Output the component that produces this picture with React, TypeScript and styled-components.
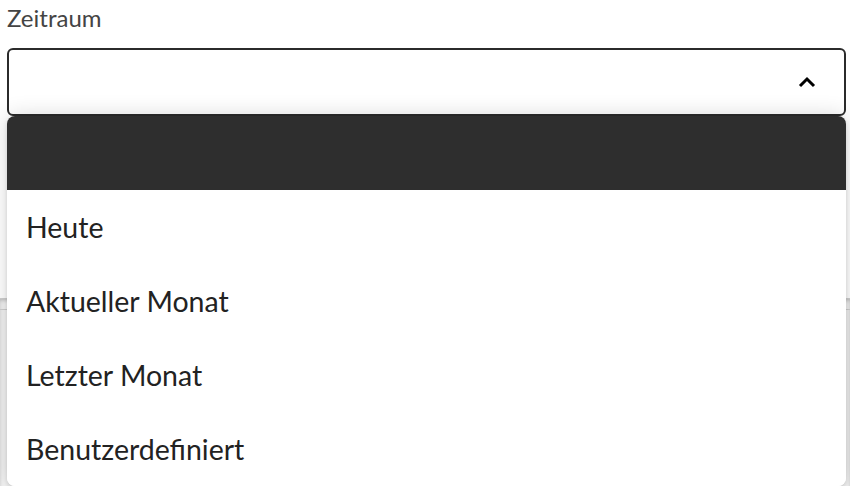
import styled, { createGlobalStyle } from "styled-components";

const GlobalStyle = createGlobalStyle`
  body {
    margin: 0;
    background: #ffffff;
    font-family: Lato, "Open Sans", sans-serif;
  }
`;

const Page = styled.div`
  width: 850px;
  height: 486px;
  overflow: hidden;
  position: relative;
  padding: 4px 4px 0 7px;
  box-sizing: border-box;
`;

const Label = styled.div`
  font-size: 24px;
  color: #444444;
  line-height: 28px;
  margin-bottom: 16px;
`;

const Field = styled.div`
  position: relative;
`;

const SelectBox = styled.div`
  height: 68px;
  box-sizing: border-box;
  border: 2px solid #2b2b2b;
  border-radius: 6px;
  display: flex;
  align-items: center;
  justify-content: flex-end;
  padding-right: 28px;
  background: #ffffff;
`;

const Behind = styled.div`
  margin-top: 182px;
  margin-left: -7px;
  margin-right: -4px;
  height: 200px;
  background: #f4f4f4;
  box-shadow: inset 0 3px 4px -1px rgba(0, 0, 0, 0.25);
`;

const BehindRow = styled.div<{ $top: number }>`
  height: 1px;
  background: #cfcfcf;
  margin-top: ${(p) => p.$top}px;
`;

const Menu = styled.ul`
  position: absolute;
  top: 68px;
  left: 0;
  right: 0;
  margin: 0;
  padding: 0;
  list-style: none;
  background: #ffffff;
  border-radius: 8px;
  overflow: hidden;
  box-shadow: 0 0 22px rgba(0, 0, 0, 0.16), 0 2px 4px rgba(0, 0, 0, 0.12);
`;

const Option = styled.li<{ $active?: boolean }>`
  height: 74px;
  display: flex;
  align-items: center;
  padding-left: 19px;
  font-size: 28.5px;
  color: #222222;
  background: ${(p) => (p.$active ? "#2e2e2e" : "#ffffff")};
`;

const Chevron = () => (
  <svg width="18" height="12" viewBox="0 0 18 12">
    <path d="M2 10 L9 3 L16 10" fill="none" stroke="#000" strokeWidth="3" />
  </svg>
);

const options = ["Heute", "Aktueller Monat", "Letzter Monat", "Benutzerdefiniert"];

const App = () => {
  return (
    <>
      <GlobalStyle />
      <Page>
        <Label>Zeitraum</Label>
        <Field>
          <SelectBox>
            <Chevron />
          </SelectBox>
          <Menu>
            <Option $active />
            {options.map((o) => (
              <Option key={o}>{o}</Option>
            ))}
          </Menu>
        </Field>
        <Behind>
          <BehindRow $top={130} />
          <BehindRow $top={10} />
        </Behind>
      </Page>
    </>
  );
};

export default App;
